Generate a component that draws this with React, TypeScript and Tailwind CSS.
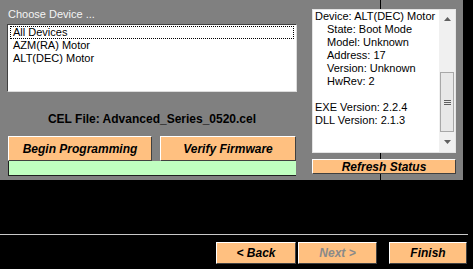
import React from "react";

const btn =
  "flex items-center justify-center bg-[#ffc080] border border-t-white border-l-white border-b-[#404040] border-r-[#404040] font-bold italic text-[12px] leading-none";

export default function App() {
  return (
    <div
      className="w-[473px] h-[269px] bg-black overflow-hidden flex flex-col"
      style={{ fontFamily: '"Liberation Sans", Arial, sans-serif' }}
    >
      {/* top gray panel */}
      <div className="relative w-[463px] h-[180px] bg-[#808080] flex shrink-0">
        <div className="absolute left-[380px] top-0 w-px h-[180px] bg-black" />
        {/* left column */}
        <div className="relative w-[305px] pl-[7px] flex flex-col">
          <div className="h-[13px] mt-[8px] text-[11px] leading-[13px] text-[#f4f4f4] pl-[1px]">
            Choose Device ...
          </div>
          <div className="mt-[3px] w-[290px] h-[68px] bg-white border border-t-[#404040] border-l-[#404040] border-b-[#dcdcdc] border-r-[#dcdcdc] px-[2px] pt-[1px] text-[11px] leading-[13px] text-black">
            <div className="border border-dotted border-black px-[2px] h-[13px] leading-[11px]">All Devices</div>
            <div className="px-[3px]">AZM(RA) Motor</div>
            <div className="px-[3px]">ALT(DEC) Motor</div>
          </div>
          <div className="mt-[20px] h-[14px] w-[290px] text-center text-[12px] leading-[14px] font-bold text-black">
            CEL File: Advanced_Series_0520.cel
          </div>
          <div className="mt-[10px] ml-[1px] flex gap-[8px]">
            <div className={btn + " w-[144px] h-[25px] text-black"}>Begin Programming</div>
            <div className={btn + " w-[136px] h-[25px] text-black"}>Verify Firmware</div>
          </div>
          <div className="ml-[1px] w-[288px] h-[15px] bg-[#c0ffc0] border-l border-b border-[#202020]" />
        </div>
        {/* right column */}
        <div className="relative ml-[7px] w-[144px] flex flex-col">
          <div className="mt-[9px] h-[144px] bg-white border border-[#e4e4e4] flex">
            <div className="flex-1 pl-[2px] text-[11px] leading-[13px] text-black whitespace-pre">
              <div>Device: ALT(DEC) Motor</div>
              <div className="pl-[12px]">State: Boot Mode</div>
              <div className="pl-[12px]">Model: Unknown</div>
              <div className="pl-[12px]">Address: 17</div>
              <div className="pl-[12px]">Version: Unknown</div>
              <div className="pl-[12px]">HwRev: 2</div>
              <div>&nbsp;</div>
              <div>EXE Version: 2.2.4</div>
              <div>DLL Version: 2.1.3</div>
            </div>
            <div className="w-[16px] bg-[#f0f0f0] flex flex-col">
              <div className="h-[17px] flex items-center justify-center">
                <svg width="7" height="4" viewBox="0 0 7 4">
                  <polygon points="3.5,0 7,4 0,4" fill="#606060" />
                </svg>
              </div>
              <div className="mt-[45px] h-[60px] mx-[1px] bg-[#e8e8e8] border border-[#a8a8a8] flex flex-col items-center justify-center gap-[1px]">
                <div className="w-[7px] h-px bg-[#606060]" />
                <div className="w-[7px] h-px bg-[#606060]" />
                <div className="w-[7px] h-px bg-[#606060]" />
              </div>
              <div className="flex-1 flex items-center justify-center">
                <svg width="7" height="4" viewBox="0 0 7 4">
                  <polygon points="0,0 7,0 3.5,4" fill="#606060" />
                </svg>
              </div>
            </div>
          </div>
          <div className={btn + " mt-[6px] h-[15px] w-[144px] text-black"}>Refresh Status</div>
        </div>
      </div>
      {/* black area */}
      <div className="mt-[54px] w-[468px] h-px bg-[#c8c8c8]" />
      <div className="mt-[7px] flex pl-[216px]">
        <div className={btn + " w-[80px] h-[22px] text-black"}>&lt; Back</div>
        <div className={btn + " ml-[2px] w-[79px] h-[22px] text-[#8a8a8a]"}>Next &gt;</div>
        <div className={btn + " ml-[12px] w-[78px] h-[22px] text-black"}>Finish</div>
      </div>
    </div>
  );
}
